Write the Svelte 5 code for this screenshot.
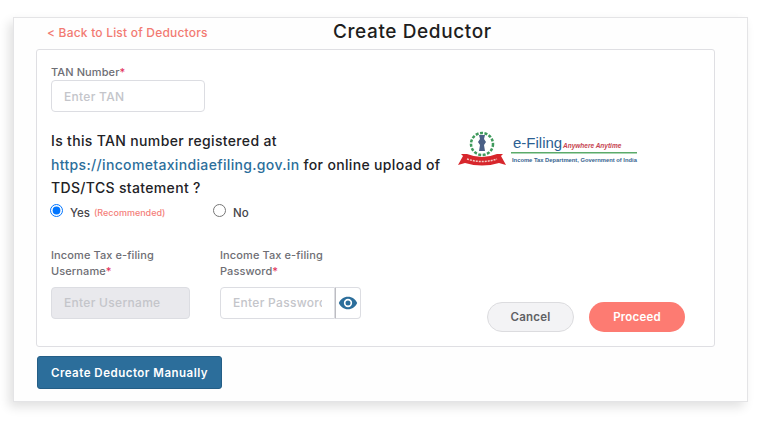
<script>
	let registered = "yes";
</script>

<main class="page">
	<div class="card">
		<header class="top">
			<a class="back" href="#back">&lt; Back to List of Deductors</a>
			<h1>Create Deductor</h1>
		</header>

		<section class="panel">
			<label class="label" for="tan">TAN Number<span class="req">*</span></label>
			<input id="tan" class="field tan" placeholder="Enter TAN" />

			<div class="middle">
				<p class="question">
					Is this TAN number registered at<br />
					<a href="#site">https://incometaxindiaefiling.gov.in</a> for online upload of<br />
					TDS/TCS statement ?
				</p>
				<svg class="logo" viewBox="0 0 182 42" width="182" height="42" aria-label="e-Filing">
					<circle cx="24" cy="15" r="11" fill="none" stroke="#3f9a5c" stroke-width="2.500" stroke-dasharray="3 1.500" />
					<path d="M21 6h6l-1 4 2 3-2 3 1 6h-6l1-6-2-3 2-3z" fill="#4a5f86" />
					<path d="M0 36l5-9-2-2 6 0q15 6 30 0l6 0-2 2 5 9-7-2q-17 5-34 0z" fill="#d7262c" />
					<path d="M9 30q15 5 30 0" fill="none" stroke="#f3c9c4" stroke-width="1.500" stroke-dasharray="2 1" />
					<text x="55" y="19" class="lg-main">e-Filing</text>
					<text x="105" y="19" class="lg-tag">Anywhere Anytime</text>
					<rect x="53" y="23" width="126" height="1.500" fill="#5bab6a" />
					<text x="54" y="33" class="lg-sub">Income Tax Department, Government of India</text>
				</svg>
			</div>

			<div class="radios">
				<label class="radio yes">
					<input type="radio" bind:group={registered} value="yes" />
					<span>Yes</span> <small>(Recommended)</small>
				</label>
				<label class="radio">
					<input type="radio" bind:group={registered} value="no" />
					<span>No</span>
				</label>
			</div>

			<div class="bottom">
				<div class="col user">
					<label class="label" for="user">Income Tax e-filing<br />Username<span class="req">*</span></label>
					<input id="user" class="field" placeholder="Enter Username" disabled />
				</div>
				<div class="col pass">
					<label class="label" for="pass">Income Tax e-filing<br />Password<span class="req">*</span></label>
					<div class="pass-row">
						<input id="pass" class="field" placeholder="Enter Password" />
						<button class="eye" type="button" aria-label="Show password">
							<svg viewBox="0 0 24 24" width="20" height="20">
								<path fill="#2c6e9b" d="M12 4.500C7 4.500 2.700 7.600 1 12c1.700 4.400 6 7.500 11 7.500s9.300-3.100 11-7.500c-1.700-4.400-6-7.500-11-7.500zm0 12.500a5 5 0 1 1 0-10 5 5 0 0 1 0 10zm0-8a3 3 0 1 0 0 6 3 3 0 0 0 0-6z" />
							</svg>
						</button>
					</div>
				</div>
				<div class="actions">
					<button class="btn cancel" type="button">Cancel</button>
					<button class="btn proceed" type="button">Proceed</button>
				</div>
			</div>
		</section>

		<button class="manual" type="button">Create Deductor Manually</button>
	</div>
</main>

<style>
	:global(body) {
		background: #fff;
		font-family: "Inter", "Noto Sans", sans-serif;
	}

	.page {
		box-sizing: border-box;
		min-height: 421px;
		padding: 17px 0 0 13px;
	}

	.card {
		box-sizing: border-box;
		width: 735px;
		height: 385px;
		padding: 0 31px 0 22px;
		background: #fefefe;
		border: 1px solid #e4e4e6;
		box-shadow: -4px 5px 10px rgba(0, 0, 0, 0.12);
	}

	.top {
		display: flex;
		align-items: center;
		height: 31px;
		padding-left: 11px;
	}

	.back {
		width: 286px;
		color: #f27a72;
		font-size: 12px;
		font-weight: 500;
		letter-spacing: 0.2px;
		text-decoration: none;
		padding-bottom: 3px;
	}

	h1 {
		margin: 0;
		color: #1e1e20;
		font-size: 19px;
		font-weight: 500;
		letter-spacing: 0.6px;
		padding-bottom: 4px;
	}

	.panel {
		box-sizing: border-box;
		width: 679px;
		height: 298px;
		padding: 14px 14px 0;
		background: #fff;
		border: 1px solid #dfdfe3;
		border-radius: 3px;
	}

	.label {
		display: block;
		color: #6e6e74;
		font-size: 11px;
		font-weight: 500;
		line-height: 16px;
		letter-spacing: 0.1px;
	}

	.req {
		color: #e2335b;
	}

	.field {
		box-sizing: border-box;
		display: block;
		height: 32px;
		padding: 0 12px;
		border: 1px solid #dcdde2;
		border-radius: 4px;
		background: #fff;
		font: 500 12px "Inter", sans-serif;
		letter-spacing: 0.3px;
		outline: none;
		min-width: 0;
	}

	.field::placeholder {
		color: #c4c5ca;
		opacity: 1;
	}

	.tan {
		width: 154px;
	}

	.middle {
		display: flex;
		align-items: flex-start;
		margin-top: 17px;
	}

	.question {
		width: 407px;
		margin: 0;
		color: #222226;
		font-size: 14px;
		font-weight: 450;
		letter-spacing: 0.34px;
		line-height: 23.500px;
		white-space: nowrap;
	}

	.question a {
		color: #2c6e9b;
		text-decoration: none;
	}

	.logo {
		flex: none;
	}

	.lg-main {
		font: 500 15px "Liberation Sans", sans-serif;
		fill: #2c5f93;
	}

	.lg-tag {
		font: italic 700 6.500px "Liberation Sans", sans-serif;
		fill: #c6434f;
	}

	.lg-sub {
		font: 700 5.800px "Liberation Sans", sans-serif;
		fill: #37648f;
	}

	.radios {
		display: flex;
		margin: 3px 0 0 -1px;
		height: 20px;
		align-items: center;
	}

	.radio {
		display: flex;
		align-items: center;
		gap: 7px;
		color: #45454a;
		font-size: 11.500px;
		font-weight: 500;
	}

	.radio.yes {
		width: 163px;
	}

	.radio input {
		width: 13px;
		height: 13px;
		margin: 0 0 4px;
	}

	.radio small {
		color: #f4807a;
		font-size: 9px;
		margin-left: -3px;
	}

	.bottom {
		display: flex;
		align-items: flex-end;
		margin-top: 24px;
	}

	.col {
		padding-bottom: 13px;
	}

	.col .field {
		margin-top: 8px;
	}

	.user {
		width: 169px;
	}

	.user .field {
		width: 139px;
		background: #e9e9ed;
	}

	.pass {
		width: 267px;
	}

	.pass-row {
		display: flex;
		width: 141px;
		margin-top: 8px;
	}

	.pass-row .field {
		width: 115px;
		margin-top: 0;
		border-radius: 4px 0 0 4px;
	}

	.eye {
		display: flex;
		align-items: center;
		justify-content: center;
		width: 26px;
		height: 32px;
		padding: 0;
		background: #fff;
		border: 1px solid #dcdde2;
		border-left-color: #bdbdc2;
		border-radius: 0 4px 4px 0;
	}

	.actions {
		display: flex;
		gap: 15px;
	}

	.btn {
		height: 30px;
		border-radius: 15px;
		font: 600 11.500px "Inter", sans-serif;
		letter-spacing: 0.2px;
	}

	.cancel {
		width: 87px;
		color: #5f6064;
		background: #f3f3f5;
		border: 1px solid #dcdcdf;
	}

	.proceed {
		width: 96px;
		color: #fff;
		background: #fd7b72;
		border: none;
	}

	.manual {
		display: block;
		width: 185px;
		height: 33px;
		margin: 9px 0 0 1px;
		padding: 0;
		color: #fff;
		background: #2c6e9b;
		border: 1px solid #245e86;
		border-radius: 3px;
		font: 600 11.500px "Inter", sans-serif;
		letter-spacing: 0.500px;
	}
</style>
